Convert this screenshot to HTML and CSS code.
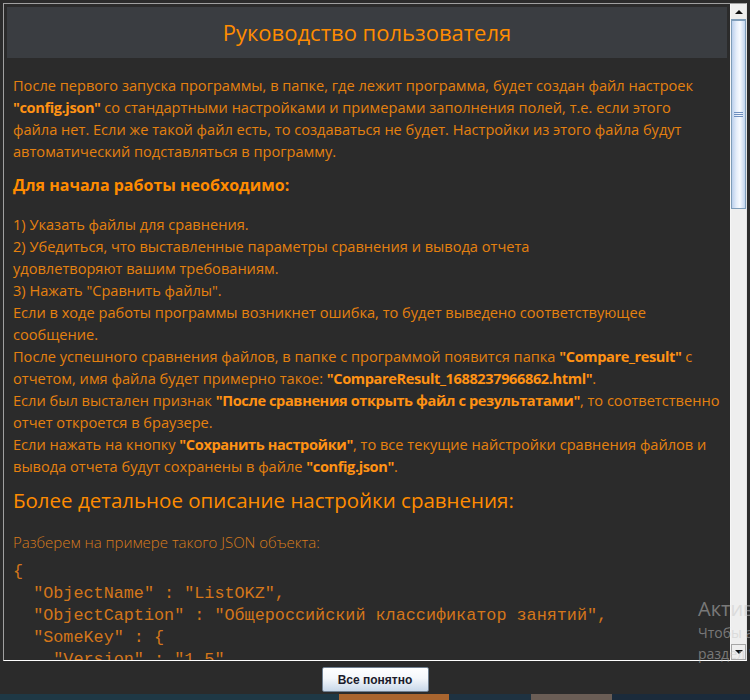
FILE: index.html
```html
<!DOCTYPE html>
<html lang="ru">
<head>
<meta charset="utf-8">
<title>Руководство пользователя</title>
<link rel="stylesheet" href="styles.css">
</head>
<body>
<div class="screen">
  <div class="frame">
    <div class="viewport">
      <h1 class="title">Руководство пользователя</h1>
      <p class="text intro">После первого запуска программы, в папке, где лежит программа, будет создан файл настроек<br><b>"config.json"</b> со стандартными настройками и примерами заполнения полей, т.е. если этого<br>файла нет. Если же такой файл есть, то создаваться не будет. Настройки из этого файла будут<br>автоматический подставляться в программу.</p>
      <h3 class="subhead">Для начала работы необходимо:</h3>
      <p class="text steps">1) Указать файлы для сравнения.<br>2) Убедиться, что выставленные параметры сравнения и вывода отчета<br>удовлетворяют вашим требованиям.<br>3) Нажать "Сравнить файлы".<br>Если в ходе работы программы возникнет ошибка, то будет выведено соответствующее<br>сообщение.<br>После успешного сравнения файлов, в папке с программой появится папка <b>"Compare_result"</b> с<br>отчетом, имя файла будет примерно такое: <b>"CompareResult_1688237966862.html"</b>.<br>Если был выстален признак <b>"После сравнения открыть файл с результатами"</b>, то соответственно<br>отчет откроется в браузере.<br>Если нажать на кнопку <b>"Сохранить настройки"</b>, то все текущие найстройки сравнения файлов и<br>вывода отчета будут сохранены в файле <b>"config.json"</b>.</p>
      <h2 class="section">Более детальное описание настройки сравнения:</h2>
      <p class="lead">Разберем на примере такого JSON объекта:</p>
      <pre class="code">{
  "ObjectName" : "ListOKZ",
  "ObjectCaption" : "Общероссийский классификатор занятий",
  "SomeKey" : {
    "Version" : "1.5",
  }
}</pre>
    </div>
    <div class="scrollbar">
      <div class="sb-btn sb-up"><span class="arrow-up"></span></div>
      <div class="sb-thumb"><span class="grip"></span></div>
      <div class="sb-track"></div>
      <div class="sb-btn sb-down"><span class="arrow-down"></span></div>
    </div>
  </div>
  <div class="actions"><button class="btn" type="button">Все понятно</button></div>
  <div class="taskbar">
    <span class="seg seg-a"></span>
    <span class="seg seg-b"></span>
    <span class="seg seg-c"></span>
    <span class="seg seg-d"></span>
    <span class="seg seg-e"></span>
  </div>
  <div class="watermark">
    <div class="wm-title">Активация Windows</div>
    <div class="wm-text">Чтобы активировать Windows, перейдите в</div>
    <div class="wm-text">раздел "Параметры".</div>
  </div>
</div>
</body>
</html>
```

FILE: styles.css
```css
* { box-sizing: border-box; }

html, body {
  margin: 0;
  padding: 0;
}

body {
  background: #2b2b2b;
  width: 750px;
  height: 700px;
  overflow: hidden;
  font-family: "Open Sans", "Noto Sans", sans-serif;
}

.screen {
  position: relative;
  width: 750px;
  height: 700px;
  display: flex;
  flex-direction: column;
  padding-top: 3px;
}

.frame {
  flex: none;
  margin-left: 3px;
  width: 744px;
  height: 658px;
  display: flex;
  border-style: solid;
  border-width: 1px;
  border-color: #a0a0a0 #e3e3e3 #ffffff #a0a0a0;
}

.viewport {
  flex: 1;
  overflow: hidden;
  background: #2b2b2b;
  padding: 3px 3px 0;
}

.title {
  margin: 0;
  height: 51px;
  padding-top: 3px;
  background: #3a3d41;
  color: #ff8c00;
  font-weight: 400;
  font-size: 22px;
  line-height: 44px;
  text-align: center;
}

.text {
  margin: 16px 0 0;
  padding: 0 6px;
  font-size: 14.6px;
  line-height: 22px;
  color: #e5810f;
  white-space: nowrap;
}

.text b {
  color: #ff9214;
  font-weight: 700;
  letter-spacing: -0.4px;
}

.subhead {
  margin: 12px 0 0;
  padding: 0 6px;
  font-size: 16px;
  line-height: 22px;
  font-weight: 700;
  color: #ff8c00;
}

.steps { margin-top: 17px; }

.section {
  margin: 9px 0 0;
  padding: 0 6px;
  font-size: 20.5px;
  line-height: 28px;
  font-weight: 400;
  color: #ff8c00;
}

.lead {
  margin: 17px 0 0;
  padding: 0 6px;
  font-size: 15px;
  line-height: 22px;
  font-weight: 300;
  color: #d97c1c;
}

.code {
  margin: 8px 0 0;
  padding: 0 6px;
  font-family: "Liberation Mono", monospace;
  font-size: 16.8px;
  line-height: 22px;
  color: #d4761a;
}

/* scrollbar */
.scrollbar {
  flex: none;
  width: 16px;
  display: flex;
  flex-direction: column;
  background: #eeeeee;
  border-left: 1px solid #f6f6f6;
}

.sb-btn {
  flex: none;
  height: 16px;
  background: #eeeeee;
  display: flex;
  align-items: center;
  justify-content: center;
}

.sb-up { border-bottom: 1px solid #7f9db9; }

.sb-down { border: 1px solid #a6a6a6; }

.arrow-up {
  width: 0;
  height: 0;
  border-left: 4px solid transparent;
  border-right: 4px solid transparent;
  border-bottom: 4px solid #111111;
}

.arrow-down {
  width: 0;
  height: 0;
  border-left: 4px solid transparent;
  border-right: 4px solid transparent;
  border-top: 4px solid #111111;
}

.sb-thumb {
  flex: none;
  height: 189px;
  border: 1px solid #7f9db9;
  background: linear-gradient(to right, #bcd0ec, #e6eefa 35%, #f7faff 60%, #c3d5ee);
  display: flex;
  align-items: center;
  justify-content: center;
}

.grip {
  width: 9px;
  height: 5px;
  border-top: 1px solid #6f8fbf;
  border-bottom: 1px solid #6f8fbf;
  background: linear-gradient(#6f8fbf, #6f8fbf) center / 100% 1px no-repeat;
}

.sb-track { flex: 1; }

/* dialog button */
.actions {
  flex: none;
  height: 33px;
  padding-top: 6px;
  display: flex;
  justify-content: center;
  align-items: flex-start;
}

.btn {
  width: 107px;
  height: 25px;
  padding: 0;
  border: 1px solid #6f7f90;
  border-radius: 2px;
  background: linear-gradient(#ffffff, #f4f7fb 45%, #c8d7e9);
  color: #1b1b2b;
  font-family: "Liberation Sans", Arial, sans-serif;
  font-weight: 700;
  font-size: 12px;
}

/* taskbar strip */
.taskbar {
  flex: 1;
  display: flex;
}

.seg { display: block; height: 100%; }
.seg-a { width: 339px; background: #1e3845; }
.seg-b { width: 110px; background: #a9652f; }
.seg-c { width: 82px; background: #1e3241; }
.seg-d { width: 81px; background: #6a5d55; }
.seg-e { flex: 1; background: #1b2b3b; }

/* OS watermark overlay */
.watermark {
  position: absolute;
  left: 698px;
  top: 596px;
  white-space: nowrap;
  color: rgba(200, 200, 200, 0.5);
  font-family: "Open Sans", "Noto Sans", sans-serif;
}

.wm-title {
  font-size: 20px;
  line-height: 26px;
}

.wm-text {
  font-size: 14px;
  line-height: 21px;
}
```
